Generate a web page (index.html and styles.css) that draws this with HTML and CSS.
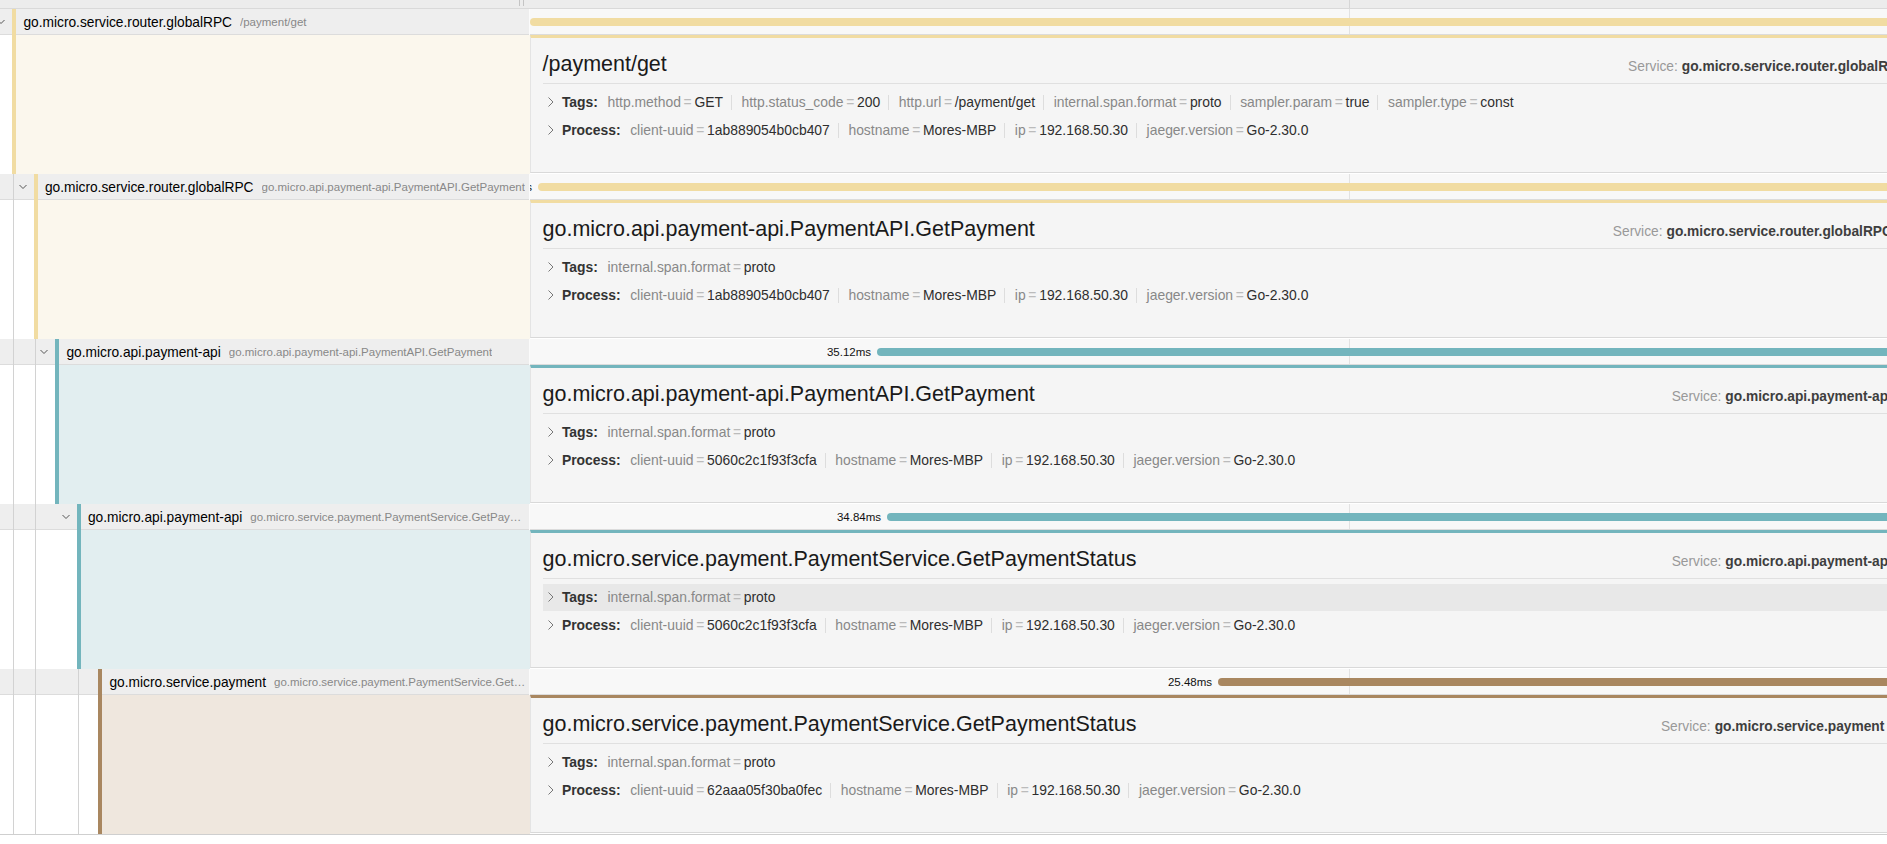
FILE: index.html
```html
<!DOCTYPE html>
<html>
<head>
<meta charset="utf-8">
<link rel="stylesheet" href="styles.css">
</head>
<body>
<div class="viewer">
  <div class="row top">
    <div class="name-col"><span class="resizer"></span></div>
    <div class="time-col"></div>
  </div>

  <!-- span 1 -->
  <div class="row span-row">
    <div class="name-col">
      <span class="toggle"><svg width="12" height="8" viewBox="0 0 12 8"><polyline points="2.5,2 6,5.5 9.5,2" fill="none" stroke="#555" stroke-width="1"/></svg></span>
      <div class="name-wrap c-yellow"><span class="svc">go.micro.service.router.globalRPC</span><span class="op">/payment/get</span></div>
    </div>
    <div class="time-col"><span class="bar b-yellow"><span class="bar-label">35.86ms</span></span></div>
  </div>
  <div class="row detail-row">
    <div class="name-col">
      <span class="spacer"></span>
      <span class="accent a-yellow"></span>
    </div>
    <div class="time-col">
      <div class="card t-yellow">
        <div class="card-head">
          <h2 class="title">/payment/get</h2>
          <ul class="overview">
            <li><span class="ov-l">Service:</span><strong>go.micro.service.router.globalRPC</strong></li>
            <li><span class="ov-l">Duration:</span><strong>35.86ms</strong></li>
            <li><span class="ov-l">Start Time:</span><strong>0μs</strong></li>
          </ul>
        </div>
        <div class="kv first">
          <svg class="arr" width="14" height="14" viewBox="0 0 14 14"><polyline points="4.5,2.5 9,7 4.5,11.5" fill="none" stroke="#777" stroke-width="1"/></svg>
          <strong class="kv-title">Tags:</strong>
          <ul class="summary">
            <li><span class="k">http.method</span><span class="d">=</span><span class="v">GET</span></li>
            <li><span class="k">http.status_code</span><span class="d">=</span><span class="v">200</span></li>
            <li><span class="k">http.url</span><span class="d">=</span><span class="v">/payment/get</span></li>
            <li><span class="k">internal.span.format</span><span class="d">=</span><span class="v">proto</span></li>
            <li><span class="k">sampler.param</span><span class="d">=</span><span class="v">true</span></li>
            <li><span class="k">sampler.type</span><span class="d">=</span><span class="v">const</span></li>
          </ul>
        </div>
        <div class="kv">
          <svg class="arr" width="14" height="14" viewBox="0 0 14 14"><polyline points="4.5,2.5 9,7 4.5,11.5" fill="none" stroke="#777" stroke-width="1"/></svg>
          <strong class="kv-title">Process:</strong>
          <ul class="summary">
            <li><span class="k">client-uuid</span><span class="d">=</span><span class="v">1ab889054b0cb407</span></li>
            <li><span class="k">hostname</span><span class="d">=</span><span class="v">Mores-MBP</span></li>
            <li><span class="k">ip</span><span class="d">=</span><span class="v">192.168.50.30</span></li>
            <li><span class="k">jaeger.version</span><span class="d">=</span><span class="v">Go-2.30.0</span></li>
          </ul>
        </div>
      </div>
    </div>
  </div>

  <!-- span 2 -->
  <div class="row span-row">
    <div class="name-col">
      <span class="indent guide"></span>
      <span class="toggle"><svg width="12" height="8" viewBox="0 0 12 8"><polyline points="2.5,2 6,5.5 9.5,2" fill="none" stroke="#555" stroke-width="1"/></svg></span>
      <div class="name-wrap c-yellow"><span class="svc">go.micro.service.router.globalRPC</span><span class="op">go.micro.api.payment-api.PaymentAPI.GetPayment</span></div>
    </div>
    <div class="time-col"><span class="bar b-yellow" style="margin-left:8px"><span class="bar-label">35.68ms</span></span></div>
  </div>
  <div class="row detail-row">
    <div class="name-col">
      <span class="indent guide"></span>
      <span class="spacer"></span>
      <span class="accent a-yellow"></span>
    </div>
    <div class="time-col">
      <div class="card t-yellow">
        <div class="card-head">
          <h2 class="title">go.micro.api.payment-api.PaymentAPI.GetPayment</h2>
          <ul class="overview">
            <li><span class="ov-l">Service:</span><strong>go.micro.service.router.globalRPC</strong></li>
            <li><span class="ov-l">Duration:</span><strong>35.68ms</strong></li>
            <li><span class="ov-l">Start Time:</span><strong>0.2ms</strong></li>
          </ul>
        </div>
        <div class="kv first">
          <svg class="arr" width="14" height="14" viewBox="0 0 14 14"><polyline points="4.5,2.5 9,7 4.5,11.5" fill="none" stroke="#777" stroke-width="1"/></svg>
          <strong class="kv-title">Tags:</strong>
          <ul class="summary">
            <li><span class="k">internal.span.format</span><span class="d">=</span><span class="v">proto</span></li>
          </ul>
        </div>
        <div class="kv">
          <svg class="arr" width="14" height="14" viewBox="0 0 14 14"><polyline points="4.5,2.5 9,7 4.5,11.5" fill="none" stroke="#777" stroke-width="1"/></svg>
          <strong class="kv-title">Process:</strong>
          <ul class="summary">
            <li><span class="k">client-uuid</span><span class="d">=</span><span class="v">1ab889054b0cb407</span></li>
            <li><span class="k">hostname</span><span class="d">=</span><span class="v">Mores-MBP</span></li>
            <li><span class="k">ip</span><span class="d">=</span><span class="v">192.168.50.30</span></li>
            <li><span class="k">jaeger.version</span><span class="d">=</span><span class="v">Go-2.30.0</span></li>
          </ul>
        </div>
      </div>
    </div>
  </div>

  <!-- span 3 -->
  <div class="row span-row">
    <div class="name-col">
      <span class="indent guide"></span><span class="indent guide"></span>
      <span class="toggle"><svg width="12" height="8" viewBox="0 0 12 8"><polyline points="2.5,2 6,5.5 9.5,2" fill="none" stroke="#555" stroke-width="1"/></svg></span>
      <div class="name-wrap c-teal"><span class="svc">go.micro.api.payment-api</span><span class="op">go.micro.api.payment-api.PaymentAPI.GetPayment</span></div>
    </div>
    <div class="time-col"><span class="bar b-teal" style="margin-left:347px"><span class="bar-label">35.12ms</span></span></div>
  </div>
  <div class="row detail-row">
    <div class="name-col">
      <span class="indent guide"></span><span class="indent guide"></span>
      <span class="spacer"></span>
      <span class="accent a-teal"></span>
    </div>
    <div class="time-col">
      <div class="card t-teal">
        <div class="card-head">
          <h2 class="title">go.micro.api.payment-api.PaymentAPI.GetPayment</h2>
          <ul class="overview">
            <li><span class="ov-l">Service:</span><strong>go.micro.api.payment-api</strong></li>
            <li><span class="ov-l">Duration:</span><strong>35.12ms</strong></li>
            <li><span class="ov-l">Start Time:</span><strong>8.7ms</strong></li>
          </ul>
        </div>
        <div class="kv first">
          <svg class="arr" width="14" height="14" viewBox="0 0 14 14"><polyline points="4.5,2.5 9,7 4.5,11.5" fill="none" stroke="#777" stroke-width="1"/></svg>
          <strong class="kv-title">Tags:</strong>
          <ul class="summary">
            <li><span class="k">internal.span.format</span><span class="d">=</span><span class="v">proto</span></li>
          </ul>
        </div>
        <div class="kv">
          <svg class="arr" width="14" height="14" viewBox="0 0 14 14"><polyline points="4.5,2.5 9,7 4.5,11.5" fill="none" stroke="#777" stroke-width="1"/></svg>
          <strong class="kv-title">Process:</strong>
          <ul class="summary">
            <li><span class="k">client-uuid</span><span class="d">=</span><span class="v">5060c2c1f93f3cfa</span></li>
            <li><span class="k">hostname</span><span class="d">=</span><span class="v">Mores-MBP</span></li>
            <li><span class="k">ip</span><span class="d">=</span><span class="v">192.168.50.30</span></li>
            <li><span class="k">jaeger.version</span><span class="d">=</span><span class="v">Go-2.30.0</span></li>
          </ul>
        </div>
      </div>
    </div>
  </div>

  <!-- span 4 -->
  <div class="row span-row">
    <div class="name-col">
      <span class="indent guide"></span><span class="indent guide"></span><span class="indent"></span>
      <span class="toggle"><svg width="12" height="8" viewBox="0 0 12 8"><polyline points="2.5,2 6,5.5 9.5,2" fill="none" stroke="#555" stroke-width="1"/></svg></span>
      <div class="name-wrap c-teal"><span class="svc">go.micro.api.payment-api</span><span class="op">go.micro.service.payment.PaymentService.GetPaymentStatus</span></div>
    </div>
    <div class="time-col"><span class="bar b-teal" style="margin-left:357px"><span class="bar-label">34.84ms</span></span></div>
  </div>
  <div class="row detail-row">
    <div class="name-col">
      <span class="indent guide"></span><span class="indent guide"></span><span class="indent"></span>
      <span class="spacer"></span>
      <span class="accent a-teal"></span>
    </div>
    <div class="time-col">
      <div class="card t-teal">
        <div class="card-head">
          <h2 class="title">go.micro.service.payment.PaymentService.GetPaymentStatus</h2>
          <ul class="overview">
            <li><span class="ov-l">Service:</span><strong>go.micro.api.payment-api</strong></li>
            <li><span class="ov-l">Duration:</span><strong>34.84ms</strong></li>
            <li><span class="ov-l">Start Time:</span><strong>8.9ms</strong></li>
          </ul>
        </div>
        <div class="kv first hover">
          <svg class="arr" width="14" height="14" viewBox="0 0 14 14"><polyline points="4.5,2.5 9,7 4.5,11.5" fill="none" stroke="#777" stroke-width="1"/></svg>
          <strong class="kv-title">Tags:</strong>
          <ul class="summary">
            <li><span class="k">internal.span.format</span><span class="d">=</span><span class="v">proto</span></li>
          </ul>
        </div>
        <div class="kv">
          <svg class="arr" width="14" height="14" viewBox="0 0 14 14"><polyline points="4.5,2.5 9,7 4.5,11.5" fill="none" stroke="#777" stroke-width="1"/></svg>
          <strong class="kv-title">Process:</strong>
          <ul class="summary">
            <li><span class="k">client-uuid</span><span class="d">=</span><span class="v">5060c2c1f93f3cfa</span></li>
            <li><span class="k">hostname</span><span class="d">=</span><span class="v">Mores-MBP</span></li>
            <li><span class="k">ip</span><span class="d">=</span><span class="v">192.168.50.30</span></li>
            <li><span class="k">jaeger.version</span><span class="d">=</span><span class="v">Go-2.30.0</span></li>
          </ul>
        </div>
      </div>
    </div>
  </div>

  <!-- span 5 -->
  <div class="row span-row">
    <div class="name-col">
      <span class="indent guide"></span><span class="indent guide"></span><span class="indent"></span><span class="indent guide"></span>
      <span class="toggle"></span>
      <div class="name-wrap c-brown"><span class="svc">go.micro.service.payment</span><span class="op">go.micro.service.payment.PaymentService.GetPaymentStatus</span></div>
    </div>
    <div class="time-col"><span class="bar b-brown" style="margin-left:688px"><span class="bar-label">25.48ms</span></span></div>
  </div>
  <div class="row detail-row">
    <div class="name-col">
      <span class="indent guide"></span><span class="indent guide"></span><span class="indent"></span><span class="indent guide"></span>
      <span class="spacer"></span>
      <span class="accent a-brown"></span>
    </div>
    <div class="time-col">
      <div class="card t-brown">
        <div class="card-head">
          <h2 class="title">go.micro.service.payment.PaymentService.GetPaymentStatus</h2>
          <ul class="overview">
            <li><span class="ov-l">Service:</span><strong>go.micro.service.payment</strong></li>
            <li><span class="ov-l">Duration:</span><strong>25.48ms</strong></li>
            <li><span class="ov-l">Start Time:</span><strong>17.2ms</strong></li>
          </ul>
        </div>
        <div class="kv first">
          <svg class="arr" width="14" height="14" viewBox="0 0 14 14"><polyline points="4.5,2.5 9,7 4.5,11.5" fill="none" stroke="#777" stroke-width="1"/></svg>
          <strong class="kv-title">Tags:</strong>
          <ul class="summary">
            <li><span class="k">internal.span.format</span><span class="d">=</span><span class="v">proto</span></li>
          </ul>
        </div>
        <div class="kv">
          <svg class="arr" width="14" height="14" viewBox="0 0 14 14"><polyline points="4.5,2.5 9,7 4.5,11.5" fill="none" stroke="#777" stroke-width="1"/></svg>
          <strong class="kv-title">Process:</strong>
          <ul class="summary">
            <li><span class="k">client-uuid</span><span class="d">=</span><span class="v">62aaa05f30ba0fec</span></li>
            <li><span class="k">hostname</span><span class="d">=</span><span class="v">Mores-MBP</span></li>
            <li><span class="k">ip</span><span class="d">=</span><span class="v">192.168.50.30</span></li>
            <li><span class="k">jaeger.version</span><span class="d">=</span><span class="v">Go-2.30.0</span></li>
          </ul>
        </div>
      </div>
    </div>
  </div>
</div>
</body>
</html>
```

FILE: styles.css
```css
* { box-sizing: border-box; }

html, body {
  margin: 0;
  padding: 0;
  background: #fff;
  overflow: hidden;
}

body {
  width: 1887px;
  height: 844px;
  font-family: "Liberation Sans", Arial, sans-serif;
  color: #000;
}

.viewer {
  width: 2168px;
  border-bottom: 1px solid #cfcfcf;
}

.row { display: flex; }

.name-col {
  width: 530px;
  flex: none;
  display: flex;
  overflow: hidden;
}

.time-col {
  flex: 1;
  min-width: 0;
  overflow: hidden;
}

/* top header strip */
.top { height: 9px; background: #ececec; border-bottom: 1px solid #d9d9d9; }
.top .name-col { justify-content: flex-end; align-items: flex-start; }
.top .time-col {
  background: linear-gradient(#d6d6d6, #d6d6d6) 819px 0 / 1px 100% no-repeat;
}
.resizer {
  width: 5px;
  height: 6px;
  margin-right: 6px;
  border-left: 1px solid #c4c4c4;
  border-right: 1px solid #c4c4c4;
}

/* span header rows */
.span-row { height: 26px; }
.span-row .name-col {
  background: #eeeeee;
  box-shadow: inset 0 -1px #dcdcdc;
  border-right: 1px solid #fbfbfb;
}
.span-row .time-col {
  display: flex;
  align-items: center;
  background: linear-gradient(#e2e2e2, #e2e2e2) 819px 0 / 1px 100% no-repeat, #f8f8f8;
  box-shadow: inset 0 -1px #dcdcdc;
}

.indent {
  flex: none;
  width: 21.5px;
}
.indent.guide {
  background: linear-gradient(#d2d2d2, #d2d2d2) 13px 0 / 1px 100% no-repeat;
}

.toggle {
  flex: none;
  width: 12px;
  margin-left: -5px;
  margin-right: 5px;
  display: flex;
  align-items: center;
  justify-content: center;
}
.toggle svg { display: block; }

.spacer {
  flex: none;
  width: 12px;
  margin-left: -5px;
  margin-right: 5px;
}

.name-wrap {
  flex: 1;
  min-width: 0;
  display: flex;
  align-items: center;
  white-space: nowrap;
  overflow: hidden;
  border-left: 4px solid;
  padding: 0 3px 0 7.4px;
}
.svc { flex: none; font-size: 13.75px; color: #000; }
.op {
  min-width: 0;
  overflow: hidden;
  text-overflow: ellipsis;
  margin-left: 8px;
  font-size: 11.5px;
  color: #888;
}

.c-yellow { border-left-color: #f1dca2; }
.c-teal { border-left-color: #73b5bd; }
.c-brown { border-left-color: #a98760; }

/* timeline bars */
.bar {
  position: relative;
  flex: none;
  width: 3000px;
  height: 8px;
  border-radius: 4px;
}
.b-yellow { background: #f1dca2; }
.b-teal { background: #73b5bd; }
.b-brown { background: #a98760; }

.bar-label {
  position: absolute;
  right: 100%;
  top: -4px;
  margin-right: 6px;
  font-size: 11.5px;
  line-height: 16px;
  color: #111;
  white-space: nowrap;
}

/* detail rows */
.detail-row { height: 139px; }
.detail-row .name-col { background: #fff; }
.detail-row .time-col { padding-bottom: 1px; }

.accent {
  flex: 1;
  border-left: 4px solid;
}
.a-yellow { border-left-color: #f1dca2; background: #fbf7ed; }
.a-teal { border-left-color: #73b5bd; background: #e2eef0; }
.a-brown { border-left-color: #a98760; background: #efe7de; }

.card {
  height: 138px;
  background: #f5f5f5;
  border-top: 3px solid;
  border-bottom: 1px solid #d9d9d9;
  border-left: 1px solid #e4e4e4;
  padding: 12px 18.5px 0 11.5px;
}
.t-yellow { border-top-color: #f1dca2; }
.t-teal { border-top-color: #73b5bd; }
.t-brown { border-top-color: #a98760; }

.card-head {
  display: flex;
  align-items: baseline;
  border-bottom: 1px solid #e0e0e0;
  padding-bottom: 4px;
  white-space: nowrap;
}
.title {
  margin: 0;
  font-size: 21.5px;
  line-height: 29px;
  font-weight: normal;
  color: #1a1a1a;
}
.overview {
  margin: 0 0 0 auto;
  padding: 0;
  list-style: none;
  display: flex;
  font-size: 13.75px;
}
.overview li + li {
  border-left: 1px solid #dddddd;
  margin-left: 8px;
  padding-left: 8px;
}
.ov-l { color: #999; margin-right: 4px; }
.overview strong { color: #3e3e3e; }

.kv {
  display: flex;
  align-items: center;
  height: 27px;
  margin-top: 1px;
  padding: 0 1.4px;
  font-size: 13.9px;
  white-space: nowrap;
}
.kv.first { margin-top: 4.5px; }
.kv.hover { background: #e8e8e8; }
.arr { flex: none; display: block; margin-right: 4px; }
.kv-title { color: #333; }

.summary {
  margin: 0;
  padding: 0;
  list-style: none;
  display: flex;
  align-items: center;
}
.summary li {
  margin-left: 9.6px;
  padding-right: 8px;
  border-right: 1px solid #dddddd;
  line-height: 15px;
}
.summary li:last-child { border-right: none; padding-right: 0; }
.k { color: #888; }
.d { color: #bbb; padding: 0 2.7px; }
.v { color: #2e2e2e; }
```
